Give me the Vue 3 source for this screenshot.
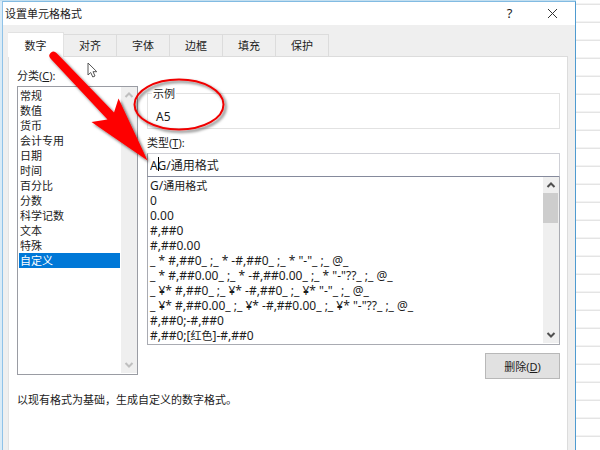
<script setup>
import { ref } from 'vue'

const tabs = ['数字', '对齐', '字体', '边框', '填充', '保护']
const activeTab = ref('数字')

const categories = ['常规', '数值', '货币', '会计专用', '日期', '时间', '百分比', '分数', '科学记数', '文本', '特殊', '自定义']
const category = ref('自定义')

const formats = [
  'G/通用格式',
  '0',
  '0.00',
  '#,##0',
  '#,##0.00',
  '_ * #,##0_ ;_ * -#,##0_ ;_ * "-"_ ;_ @_ ',
  '_ * #,##0.00_ ;_ * -#,##0.00_ ;_ * "-"??_ ;_ @_ ',
  '_ ¥* #,##0_ ;_ ¥* -#,##0_ ;_ ¥* "-"_ ;_ @_ ',
  '_ ¥* #,##0.00_ ;_ ¥* -#,##0.00_ ;_ ¥* "-"??_ ;_ @_ ',
  '#,##0;-#,##0',
  '#,##0;[红色]-#,##0'
]
const code = ref('AG/通用格式')

// Split a format code into Latin and Chinese runs, which are set in different sizes.
const runs = (text) => text.match(/[\u4e00-\u9fff]+|[^\u4e00-\u9fff]+/g)
const isHan = (text) => /[\u4e00-\u9fff]/.test(text)
</script>

<template>
  <div class="sheet">
    <main class="dialog" role="dialog" aria-labelledby="dialog-title">
      <header class="titlebar">
        <h1 id="dialog-title">设置单元格格式</h1>
        <button class="caption" type="button" aria-label="帮助">?</button>
        <button class="caption" type="button" aria-label="关闭">
          <svg width="11" height="11" viewBox="0 0 11 11"><path d="M1 1 L10 10 M10 1 L1 10" /></svg>
        </button>
      </header>

      <div class="body">
        <nav class="tabs" role="tablist">
          <button
            v-for="tab in tabs"
            :key="tab"
            class="tab"
            :class="{ active: tab === activeTab }"
            type="button"
            role="tab"
            :aria-selected="tab === activeTab"
            @click="activeTab = tab"
          >{{ tab }}</button>
        </nav>

        <section class="panel" role="tabpanel">
          <div class="columns">
            <div class="left">
              <div id="category-label" class="label">分类(<u>C</u>):</div>
              <div class="listbox category-box">
                <ul role="listbox" aria-labelledby="category-label" tabindex="0">
                  <li
                    v-for="name in categories"
                    :key="name"
                    role="option"
                    :aria-selected="name === category"
                    :class="{ selected: name === category }"
                    @click="category = name"
                  >{{ name }}</li>
                </ul>
                <div class="scrollbar disabled">
                  <button type="button" aria-label="向上"><svg width="10" height="6" viewBox="0 0 10 6"><path d="M1.5 5 L5 1.5 L8.5 5" /></svg></button>
                  <span class="track"></span>
                  <button type="button" aria-label="向下"><svg width="10" height="6" viewBox="0 0 10 6"><path d="M1.5 1 L5 4.5 L8.5 1" /></svg></button>
                </div>
              </div>
            </div>

            <div class="right">
              <fieldset class="sample">
                <legend>示例</legend>
                <output>A5</output>
              </fieldset>
              <label class="label" for="format-code">类型(<u>T</u>):</label>
              <div class="entry">
                <input id="format-code" v-model="code" type="text" spellcheck="false" />
                <span class="caret"></span>
              </div>
              <div class="listbox format-box">
                <ul role="listbox" aria-label="类型" tabindex="0">
                  <li v-for="format in formats" :key="format" role="option" aria-selected="false" @click="code = format"><span v-for="(run, i) in runs(format)" :key="i" :class="{ han: isHan(run) }">{{ run }}</span></li>
                </ul>
                <div class="scrollbar">
                  <button type="button" aria-label="向上"><svg width="10" height="6" viewBox="0 0 10 6"><path d="M1.5 5 L5 1.5 L8.5 5" /></svg></button>
                  <span class="track"><span class="thumb"></span></span>
                  <button type="button" aria-label="向下"><svg width="10" height="6" viewBox="0 0 10 6"><path d="M1.5 1 L5 4.5 L8.5 1" /></svg></button>
                </div>
              </div>
              <button class="delete" type="button">删除(<u>D</u>)</button>
            </div>
          </div>
          <p class="hint">以现有格式为基础，生成自定义的数字格式。</p>
        </section>
      </div>
    </main>

    <svg class="marks" width="240" height="180" viewBox="0 0 240 180" aria-hidden="true">
      <defs>
        <filter id="shade" x="-20%" y="-20%" width="150%" height="150%">
          <feDropShadow dx="2" dy="2" stdDeviation="1.5" flood-color="#000" flood-opacity="0.6" />
        </filter>
      </defs>
      <path class="pointer" d="M88 63 V75 L90.7 72.5 L92.8 77 L95 76 L93 71.7 H96.8 Z" />
      <g filter="url(#shade)">
        <path class="arrow" d="M50.5 58.5 A4 4 0 0 1 56.5 53 L114 112.5 L118.500 98.500 L147.500 160.500 L91.500 122 L107.500 119.500 Z" />
        <ellipse class="ring" cx="179" cy="104.500" rx="44.500" ry="25" />
      </g>
    </svg>
  </div>
</template>

<style>
body {
  margin: 0;
}
</style>

<style scoped>
* {
  box-sizing: border-box;
}

.sheet {
  position: relative;
  min-height: 100vh;
  padding: 1px 24px 0 2px;
  font: 11px/15px "Noto Sans", "Noto Sans CJK SC", sans-serif;
  color: #1c1c1c;
  background:
    linear-gradient(#c3dff0, #c3dff0) 0 0 / calc(100% - 24px) 1px no-repeat,
    linear-gradient(#d9ebf7, #d9ebf7) 0 0 / 2px 100% no-repeat,
    repeating-linear-gradient(#fff 0 16px, #f3f3f3 16px 17px, #e4e4e4 17px 18px) 0 5px;
}

.dialog {
  display: flex;
  flex-direction: column;
  min-height: calc(100vh - 1px);
  border: 1px solid #4f9bd0;
  border-top-color: #82bbe2;
  border-left-color: #8fc2e8;
  border-bottom: 0;
  background: #efefef;
}

button {
  font: inherit;
  color: inherit;
}

.titlebar {
  display: flex;
  align-items: center;
  height: 23px;
  padding-right: 1px;
  background: #fff;
}

h1 {
  flex: 1;
  margin: 0;
  padding-left: 2px;
  font-size: 11px;
  font-weight: 400;
}

.caption {
  display: flex;
  align-items: center;
  justify-content: center;
  width: 43px;
  height: 23px;
  padding: 0;
  border: 0;
  background: none;
  font-size: 13px;
}

.caption path {
  fill: none;
  stroke: #333;
  stroke-width: 1;
}

.body {
  display: flex;
  flex: 1;
  flex-direction: column;
  padding: 7px 7px 0 5px;
}

.tabs {
  display: flex;
  align-items: flex-end;
  height: 24px;
}

.tab {
  width: 53px;
  height: 22px;
  padding: 0;
  border: 1px solid #dcdcdc;
  border-width: 1px 1px 0 0;
  background: #efefef;
}

.tab.active {
  z-index: 1;
  width: 56px;
  height: 25px;
  margin-bottom: -1px;
  border-color: #e2e2e2;
  background: #fff;
}

.panel {
  flex: 1;
  padding: 11px 7px 0 8px;
  border: 1px solid #dcdcdc;
  border-left-color: #e2e2e2;
  border-bottom: 0;
  background: #fff;
}

.columns {
  display: flex;
  gap: 9px;
}

.left {
  width: 121px;
}

.label {
  display: block;
  height: 18px;
}

.listbox {
  display: flex;
  border: 1px solid #9a9ca3;
  background: #fff;
}

.category-box {
  height: 289px;
}

ul {
  flex: 1;
  margin: 0;
  padding: 1px;
  list-style: none;
  overflow: hidden;
  outline: none;
}

li {
  height: 15px;
  padding-left: 1px;
  line-height: 15px;
  white-space: pre;
}

.selected {
  color: #fff;
  background: #0078d7;
}

.scrollbar {
  display: flex;
  flex-direction: column;
  width: 16px;
  margin-bottom: 1px;
  background: #efefef;
}

.scrollbar button {
  display: flex;
  align-items: center;
  justify-content: center;
  height: 16px;
  padding: 0;
  border: 0;
  background: none;
}

.scrollbar path {
  fill: none;
  stroke: #505050;
  stroke-width: 2;
}

.scrollbar.disabled path {
  stroke: #bfbfbf;
}

.track {
  flex: 1;
}

.thumb {
  display: block;
  height: 30px;
  margin-right: 1px;
  background: #cdcdcd;
}

.right {
  display: flex;
  flex: 1;
  flex-direction: column;
}

.sample {
  height: 43px;
  margin: 18px 0 6px;
  padding: 8px 8px 0;
  border: 1px solid #e2e2e2;
}

legend {
  margin-left: -4px;
  padding: 0 1px;
  line-height: 15px;
}

output {
  display: block;
  font-size: 12px;
}

.entry {
  position: relative;
}

input {
  display: block;
  width: 100%;
  height: 24px;
  padding: 0 2px;
  border: 1px solid #cfd0d6;
  border-left-color: #9a9ca3;
  border-bottom-color: #858a9c;
  outline: none;
  font: inherit;
  font-size: 12px;
  color: inherit;
  background: #fff;
}

.caret {
  position: absolute;
  top: 4px;
  left: 11px;
  width: 1px;
  height: 14px;
  background: #000;
}

.format-box {
  height: 168px;
  border-top: 0;
  border-color: #a9abb2;
  font-size: 12px;
}

.han {
  font-size: 11px;
}

.delete {
  align-self: flex-end;
  width: 75px;
  height: 26px;
  margin-top: 8px;
  padding: 0;
  border: 1px solid #b8b8b8;
  background: #e1e1e1;
}

.hint {
  margin: 13px 0 0;
}

.marks {
  position: absolute;
  z-index: 2;
  top: 0;
  left: 0;
  pointer-events: none;
}

.pointer {
  fill: #fff;
  stroke: #555;
  stroke-width: 1;
}

.arrow {
  fill: #fe0000;
}

.ring {
  fill: none;
  stroke: #f00505;
  stroke-width: 2;
}
</style>
